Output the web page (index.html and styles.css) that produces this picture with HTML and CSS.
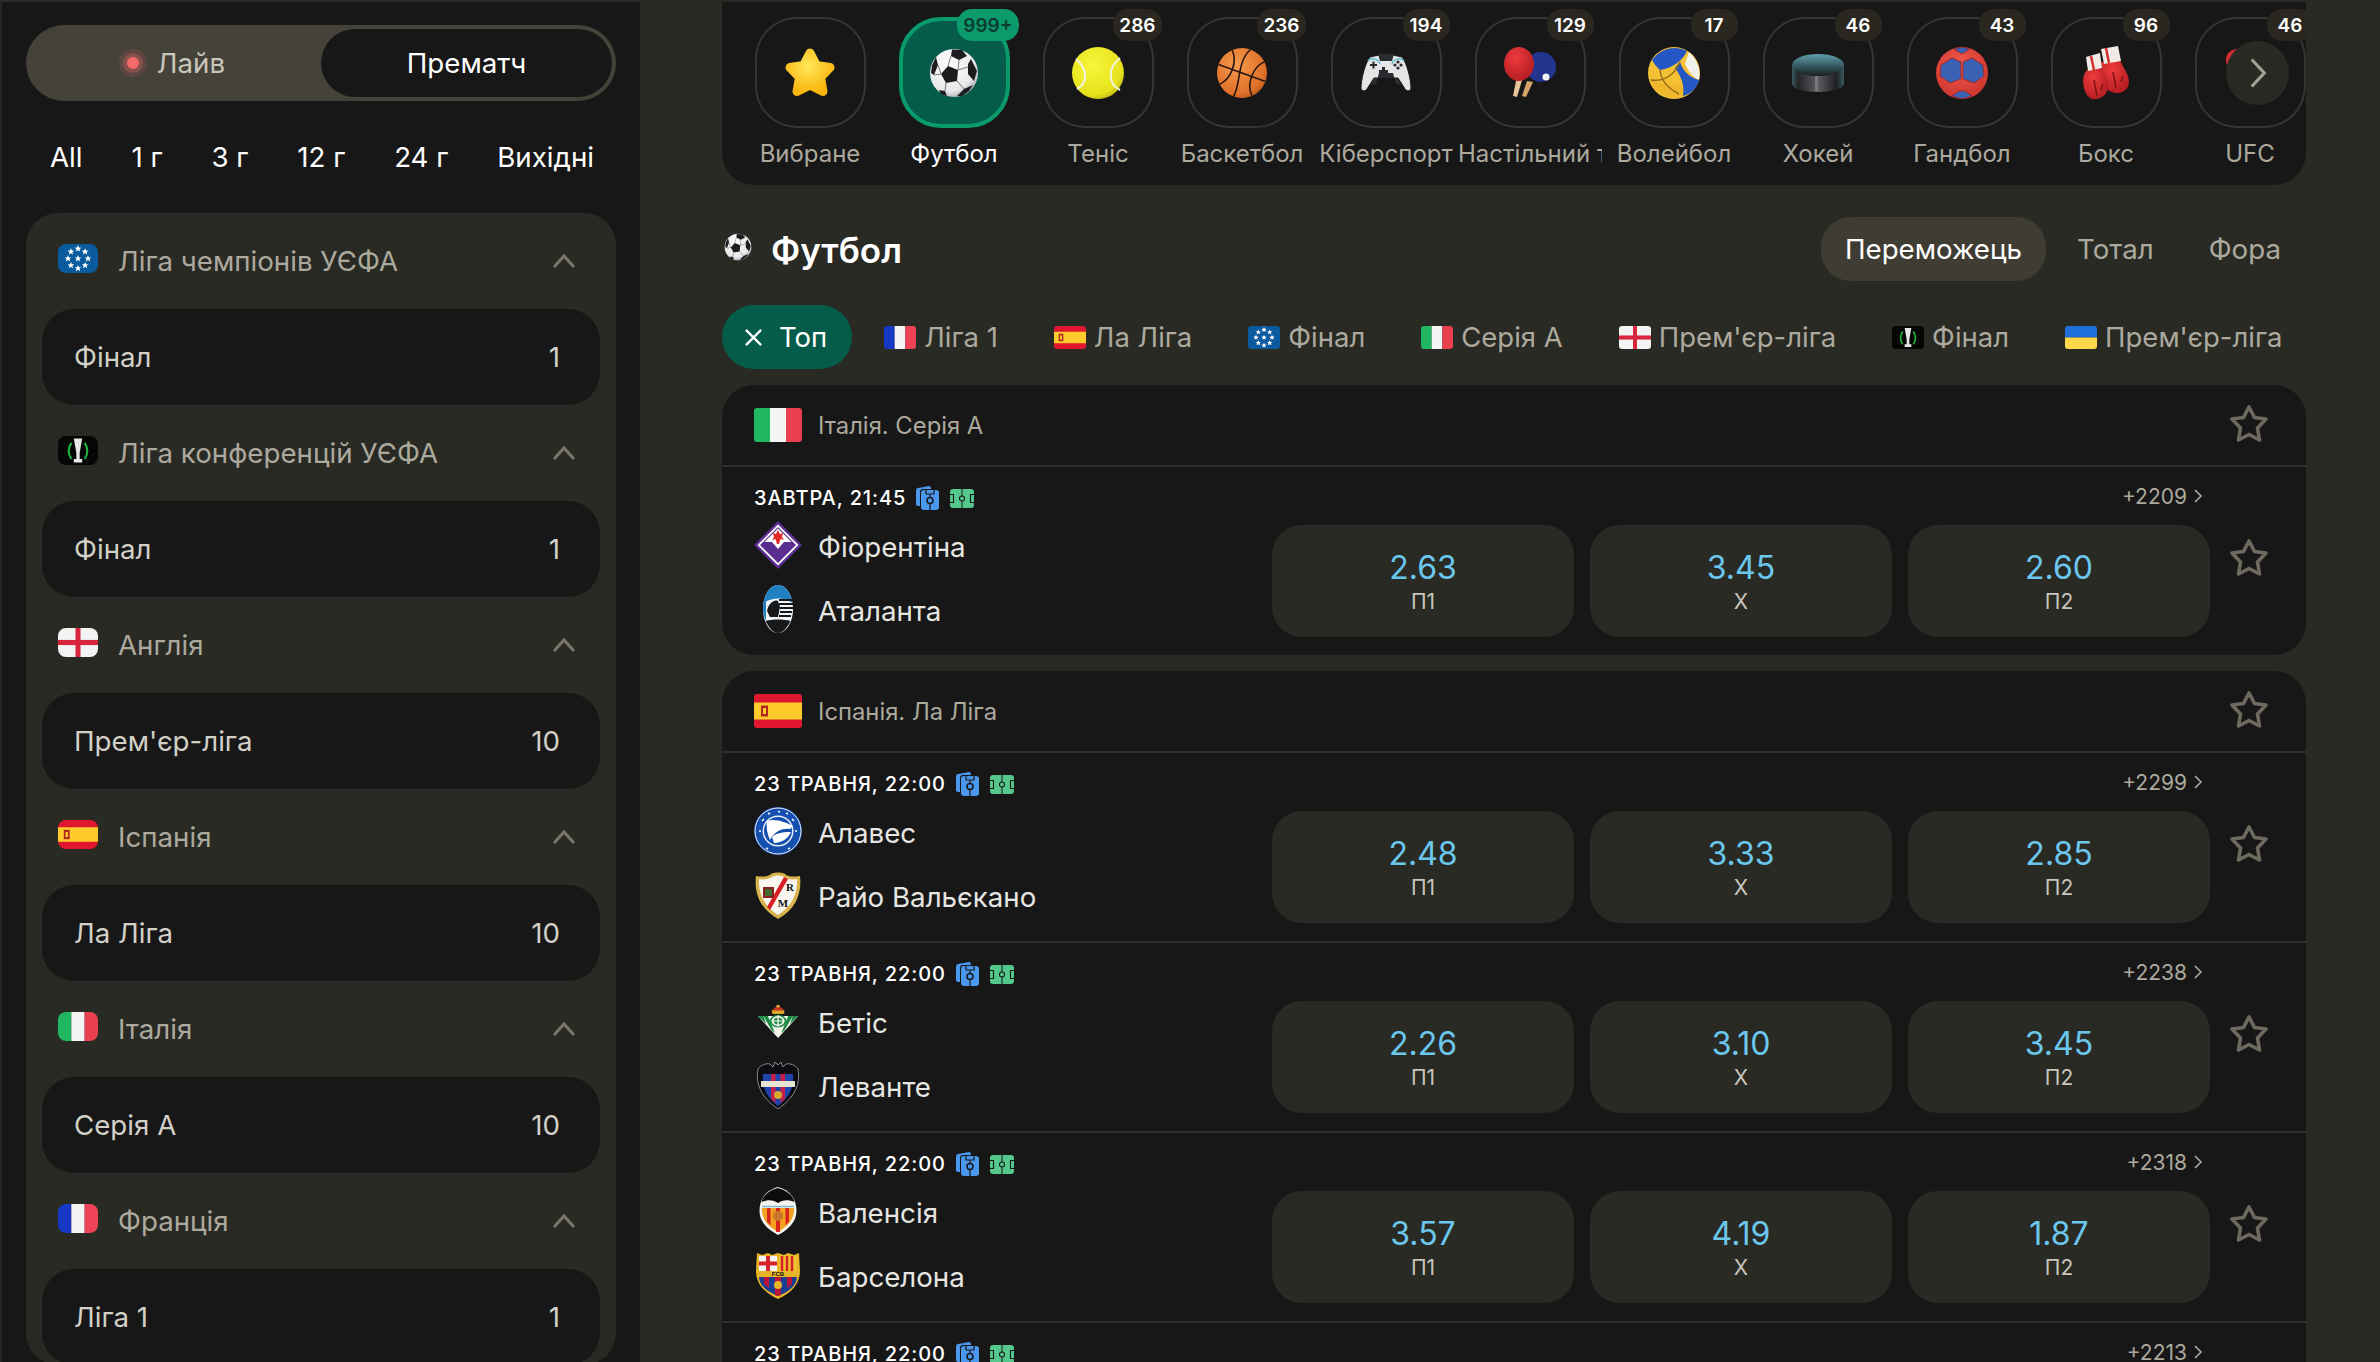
FILE: index.html
```html
<!DOCTYPE html>
<html lang="uk">
<head>
  <meta charset="utf-8">
  <title>Футбол</title>
  <link rel="stylesheet" href="styles.css">
</head>
<body>
  <!-- shared drawings -->
  <svg class="defs" aria-hidden="true">
    <defs>
      <radialGradient id="g-star" cx="45%" cy="35%" r="70%"><stop offset="0" stop-color="#ffe75a"/><stop offset="1" stop-color="#f9b50c"/></radialGradient>
      <radialGradient id="g-white" cx="40%" cy="35%" r="75%"><stop offset="0" stop-color="#fff"/><stop offset=".7" stop-color="#e8e8ea"/><stop offset="1" stop-color="#9a9aa2"/></radialGradient>
      <radialGradient id="g-tennis" cx="40%" cy="35%" r="75%"><stop offset="0" stop-color="#f8f63c"/><stop offset=".75" stop-color="#e6e21c"/><stop offset="1" stop-color="#b5ae12"/></radialGradient>
      <radialGradient id="g-basket" cx="40%" cy="35%" r="75%"><stop offset="0" stop-color="#f59a4c"/><stop offset=".75" stop-color="#e0702a"/><stop offset="1" stop-color="#b04d18"/></radialGradient>
      <radialGradient id="g-hand" cx="45%" cy="35%" r="75%"><stop offset="0" stop-color="#f25a4c"/><stop offset="1" stop-color="#c9302a"/></radialGradient>
      <radialGradient id="g-red" cx="40%" cy="30%" r="80%"><stop offset="0" stop-color="#ee3a3c"/><stop offset="1" stop-color="#ad1a20"/></radialGradient>
      <linearGradient id="g-puck" x1="0" y1="0" x2="1" y2="0"><stop offset="0" stop-color="#3c5a60"/><stop offset=".12" stop-color="#232527"/><stop offset=".5" stop-color="#5c5e62"/><stop offset=".85" stop-color="#1e2022"/><stop offset="1" stop-color="#3c5a60"/></linearGradient>
      <linearGradient id="g-pucktop" x1="0" y1="0" x2="0" y2="1"><stop offset="0" stop-color="#5f9fac"/><stop offset=".6" stop-color="#33525a"/><stop offset="1" stop-color="#1b1e20"/></linearGradient>

      <path id="s" d="M0-4 1.200-1.300 4-1.200 1.800.6 2.600 3.400 0 1.800-2.600 3.400-1.800.6-4-1.200-1.200-1.300Z" fill="#fff"/>

      <g id="f-ucl">
        <rect width="48" height="34" fill="#0a5a9e"/>
        <use href="#s" x="24" y="5.500"/><use href="#s" x="32.500" y="9"/><use href="#s" x="36" y="17"/><use href="#s" x="32.500" y="25"/>
        <use href="#s" x="24" y="28.500"/><use href="#s" x="15.500" y="25"/><use href="#s" x="12" y="17"/><use href="#s" x="15.500" y="9"/><use href="#s" x="24" y="17"/>
      </g>
      <g id="f-uecl">
        <rect width="48" height="34" fill="#050605"/>
        <path d="M16 8C12 14 12 21 16 27M32 8C36 14 36 21 32 27" fill="none" stroke="#20b53c" stroke-width="2.500"/>
        <path d="M19 3H29L26 20V27H29V31H19V27H22V20Z" fill="#e8e8e8"/>
      </g>
      <g id="f-en">
        <rect width="48" height="34" fill="#f3f3f3"/>
        <rect x="21" width="6" height="34" fill="#d8243c"/><rect y="14" width="48" height="6" fill="#d8243c"/>
      </g>
      <g id="f-es">
        <rect width="48" height="34" fill="#e0172e"/><rect y="8.500" width="48" height="17" fill="#ffcb2c"/>
        <rect x="7" y="11.500" width="7" height="11" fill="#b3261e"/><rect x="9" y="14" width="3" height="6" fill="#ffcb2c"/>
      </g>
      <g id="f-it">
        <rect width="16" height="34" fill="#1fb860"/><rect x="16" width="16" height="34" fill="#f5f5f5"/><rect x="32" width="16" height="34" fill="#e8404f"/>
      </g>
      <g id="f-fr">
        <rect width="16" height="34" fill="#1638c4"/><rect x="16" width="16" height="34" fill="#f5f5f5"/><rect x="32" width="16" height="34" fill="#ef4358"/>
      </g>
      <g id="f-ua">
        <rect width="48" height="17" fill="#1e6fd9"/><rect y="17" width="48" height="17" fill="#ffd84a"/>
      </g>

      <g id="i-star"><path d="M27 7 33.500 19.500 47 21.500 37.500 31.500 40 45.500 27 39 14 45.500 16.500 31.500 7 21.500 20.500 19.500Z" fill="url(#g-star)" stroke="url(#g-star)" stroke-width="9" stroke-linejoin="round"/></g>
      <g id="i-ball">
        <circle cx="27" cy="27" r="24" fill="url(#g-white)"/>
        <path d="M21 20 31 24 30 35 19 37 14 28Z" fill="#1d1d20"/>
        <path d="M25 3.500 35 4 40 10 32 14 24 10ZM44 13 50 25 47 35 41 28 41 18ZM30 50 37 43 46 39 42 45 35 50ZM5 19 9 11 11 19 7 29 4 27ZM12 44 18 45 20 50 14 48Z" fill="#1d1d20"/>
        <path d="M24 10 21 20M32 14 31 24M31 24 41 21M30 35 37 43M19 37 18 45M14 28 7 29M14 28 11 19" stroke="#77777d" stroke-width="1" fill="none"/>
      </g>
      <g id="i-tennis">
        <circle cx="27" cy="27" r="26" fill="url(#g-tennis)"/>
        <path d="M5 13C17 23 17 37 6 43M49 12C36 22 37 38 49 44" fill="none" stroke="#f2f2dc" stroke-width="2.200"/>
      </g>
      <g id="i-basket">
        <circle cx="27" cy="27" r="25" fill="url(#g-basket)"/>
        <path d="M2 27H52M27 2C18 18 30 38 27 52M10 9C19 18 19 36 10 45M44 9C35 18 35 36 44 45" fill="none" stroke="#2a1610" stroke-width="1.600" transform="rotate(20 27 27)"/>
      </g>
      <g id="i-pad">
        <path d="M11 11 20 9H34L43 11C48 17 52 34 52 42 52 45 48 46 46 43L39 32H15L8 43C6 46 2 45 2 42 2 34 6 17 11 11Z" fill="#e4e5e7" stroke="#17181a" stroke-width="1"/>
        <path d="M19 8H35L33 15H21Z" fill="#2a2c30"/>
        <path d="M15 32H39L42 39 37 38 34 27H20L17 38 12 39Z" fill="#2a2c30"/>
        <path d="M9 15C12 11 20 13 21 18M45 15C42 11 34 13 33 18" fill="none" stroke="#5fc0d2" stroke-width="1.400"/>
        <path d="M20 24h3v-3h3v3h3v3h-3v3h-3v-3h-3Z" fill="#26282b"/>
        <rect x="11" y="18" width="7" height="2" fill="#26282b"/><rect x="13.500" y="15.500" width="2" height="7" fill="#26282b"/>
        <circle cx="36" cy="19" r="1.600" fill="#26282b"/><circle cx="42" cy="19" r="1.600" fill="#26282b"/><circle cx="39" cy="16" r="1.600" fill="#26282b"/><circle cx="39" cy="22" r="1.600" fill="#26282b"/>
      </g>
      <g id="i-paddles">
        <circle cx="38" cy="21" r="15" fill="#24358f"/>
        <path d="M24 35 19 50 23 51 30 36Z" fill="#d9a46a"/>
        <circle cx="43" cy="31" r="3.500" fill="#f4f4f4"/>
        <path d="M14 30 10 50 14 51 20 31Z" fill="#e8c49a"/>
        <ellipse cx="16" cy="18" rx="15" ry="17" fill="url(#g-red)"/>
      </g>
      <g id="i-volley">
        <circle cx="27" cy="27" r="26" fill="#f4c134"/>
        <path d="M5 14C14 2 28-1 40 5 36 14 26 22 13 24 10 21 7 18 5 14Z" fill="#2457c4"/>
        <path d="M42 6C50 13 54 24 52 34 46 32 42 26 38 18Z" fill="#f1f1ea"/>
        <path d="M3 30C10 38 24 42 38 36L48 41C40 52 22 56 9 44 5 40 3 35 3 30Z" fill="#f0b72c"/>
        <path d="M28 22C34 30 38 40 36 50 44 48 50 42 52 34 44 32 36 26 33 16Z" fill="#2457c4"/>
        <path d="M13 24C14 34 20 42 32 48M33 16C28 28 18 36 4 34" fill="none" stroke="#8f6a18" stroke-width="1.400"/>
      </g>
      <g id="i-puck">
        <path d="M1 18V37C1 43 13 46 27 46S53 43 53 37V18Z" fill="url(#g-puck)"/>
        <ellipse cx="27" cy="19" rx="26" ry="11" fill="url(#g-pucktop)"/>
        <rect x="24" y="30" width="3" height="15" fill="#77797d"/>
      </g>
      <g id="i-hand">
        <circle cx="27" cy="27" r="26" fill="url(#g-hand)"/>
        <path d="M26 16 17 12 6 19 5 30 15 37 26 33ZM28 16 37 12 48 19 49 30 39 37 28 33ZM19 3 27 1 35 3 27 8ZM17 50 24 45H30L37 50 27 53Z" fill="#3a62b4" stroke="#9c2a2a" stroke-width="1"/>
      </g>
      <g id="i-glove">
        <path d="M22 16 41 14C44 22 50 28 50 36 50 43 44 48 36 47 30 46 26 42 26 36 24 30 22 22 22 16Z" fill="url(#g-red)"/>
        <path d="M8 24 22 22C26 28 30 34 29 42 28 50 20 54 13 53 7 51 4 42 4 34 4 30 6 26 8 24Z" fill="url(#g-red)"/>
        <path d="M7 11 21 7 23 22 9 25ZM22 3 39 0 42 15 25 18Z" fill="#f1e9e4"/>
        <path d="M12 10 15 24M27 2 30 17" stroke="#d23030" stroke-width="2.500"/>
        <path d="M34 26 37 42M44 30 42 36M15 34 18 50M24 38 22 44" stroke="#7a1015" stroke-width="1.400" fill="none"/>
      </g>
      <g id="i-ufc">
        <path d="M3 16C2 7 9 2 18 3 28 4 40 10 44 20 48 32 40 46 28 48 16 46 8 34 3 16Z" fill="url(#g-red)"/>
      </g>

      <g id="l-cards">
        <path d="M1 6C1 4 2 3 3 3L14 1C15 1 16 2 16 4H8C6 4 5 5 5 7V21L3 21C2 21 1 20 1 19Z" fill="#4a97ee"/>
        <rect x="6" y="5" width="18" height="20" rx="3" fill="#4a97ee"/>
        <path d="M11 5V9H19V5M15 9V12M15 19V25" fill="none" stroke="#171717" stroke-width="1.200"/>
        <circle cx="15" cy="15.500" r="3" fill="none" stroke="#171717" stroke-width="1.500"/>
      </g>
      <g id="l-field">
        <rect width="24" height="19" rx="3" fill="#54c88a"/>
        <path d="M12 0V7M12 12V19" stroke="#171717" stroke-width="1"/>
        <circle cx="12" cy="9.500" r="2.500" fill="none" stroke="#171717" stroke-width="1.100"/>
        <path d="M0 5.500H3.500V13.500H0M24 5.500H20.500V13.500H24" fill="none" stroke="#171717" stroke-width="1.100"/>
      </g>
      <path id="i-fav" d="M19 3 24.500 13.500 36 15 27.500 24 29.500 36 19 30.500 8.500 36 10.500 24 2 15 13.500 13.500Z" fill="none" stroke="#6f6a5f" stroke-width="3.600" stroke-linejoin="round"/>

      <g id="t-fio">
        <path d="M24 0 48 24 24 48 0 24Z" fill="#5b2d91"/>
        <path d="M24 3.500 44.500 24 24 44.500 3.500 24Z" fill="#fff"/>
        <path d="M24 6 42 24 24 42 6 24Z" fill="#5b2d91"/>
        <path d="M24 7.500 37.500 21 30 21 24 28 18 21 10.500 21Z" fill="#fff"/>
        <path d="M24 9 26 13 29 12 28 16 30 19 26.500 18 25 23H23L21.500 18 18 19 20 16 19 12 22 13Z" fill="#e12a2a"/>
      </g>
      <g id="t-ata">
        <ellipse cx="24" cy="24" rx="15" ry="24" fill="#f2f5f7"/>
        <path d="M9.500 18C11 8 17 0 24 0S37 8 38.500 18C30 12 18 12 9.500 18Z" fill="#1f7fc0"/>
        <path d="M11.500 36C18 34 30 34 36.500 36 33 43 29 48 24 48S15 43 11.500 36Z" fill="#17181a"/>
        <path d="M9 24C9 18 10 14 12 12V36C10 32 9 28 9 24Z" fill="#1f7fc0"/>
        <path d="M25 15H38M25 19H39M26 23H39M26 27H38M25 31H37" stroke="#17181a" stroke-width="2"/>
        <path d="M13 26C14 20 19 14 24 16L26 22 24 32H16Z" fill="#17181a"/>
      </g>
      <g id="t-ala">
        <circle cx="24" cy="24" r="24" fill="#1550b0"/>
        <circle cx="24" cy="24" r="23" fill="none" stroke="#e8eef8" stroke-width="1"/>
        <circle cx="24" cy="24" r="15.500" fill="#e8eef8"/>
        <circle cx="24" cy="24" r="14" fill="#1550b0"/>
        <path d="M13 14C21 11 31 15 39 19L36 22C30 21 21 23 16 33 13 27 12 20 13 14Z" fill="#fff"/>
        <path d="M18 30C24 25 31 25 37 25 34 32 27 36 20 36Z" fill="#fff"/>
        <path d="M24 4.500 26 5M14 7 16 6M32 6 34 7M38 12 40 14M8 14 10 12M5 24H7M41 24H43M12 41 14 42M34 42 36 41" stroke="#fff" stroke-width="1.600"/>
      </g>
      <g id="t-ray">
        <path d="M2 5C8 6 14 6 17 3 20 1 28 1 31 3 34 6 40 6 46 5 48 22 42 38 24 48 6 38 0 22 2 5Z" fill="#d8b24a"/>
        <path d="M5 8C10 9 15 8 18 6 21 4 27 4 30 6 33 8 38 9 43 8 44 22 38 35 24 44 10 35 4 22 5 8Z" fill="#f8f6ee"/>
        <path d="M30 6 34 8 16 39 13 36Z" fill="#d81f26"/>
        <rect x="9" y="16" width="11" height="11" fill="#8a1f1f"/><rect x="11" y="18" width="7" height="7" fill="#3f6b2f"/>
        <text class="crest-letter" x="36" y="20">R</text><text class="crest-letter" x="29" y="36">M</text>
      </g>
      <g id="t-bet" transform="translate(2 7) scale(.92 .71)">
        <path d="M17 13C17 7 20 5 24 3 28 5 31 7 31 13Z" fill="#c8321e"/>
        <path d="M17 9H31L30 14H18Z" fill="#d9a92e"/>
        <circle cx="24" cy="3" r="2" fill="#d9a92e"/>
        <path d="M2 17H46L24 48Z" fill="#f4f6ee"/>
        <path d="M8 17H13L20.500 41 17 37ZM35 17H40L31 37 27.500 41ZM2 17H8L11 28 6 22ZM40 17H46L42 22 37 28Z" fill="#1c8a45"/>
        <circle cx="24" cy="24" r="9" fill="#1c8a45"/><circle cx="24" cy="24" r="6" fill="none" stroke="#f4f6ee" stroke-width="2"/>
        <path d="M24 16V32M17 24H31" stroke="#f4f6ee" stroke-width="1.500"/>
      </g>
      <g id="t-lev">
        <path d="M4 8C7 4 12 2 16 3L19 6 21 1 24 4 27 1 29 6 32 3C36 2 41 4 44 8 46 20 44 34 24 48 4 34 2 20 4 8Z" fill="#0c0c10" stroke="#8a8a90" stroke-width="1"/>
        <path d="M9 13H39C40 26 36 36 24 45 12 36 8 26 9 13Z" fill="#1f45ac"/>
        <path d="M17 13H21.500V42L17 38ZM26.500 13H31V38L26.500 42Z" fill="#c4204a"/>
        <rect x="7" y="20" width="34" height="6" fill="#e8e4d4"/>
        <circle cx="24" cy="34" r="4" fill="#d9a92e"/>
      </g>
      <g id="t-val">
        <path d="M24 0C36 3 42.500 12 42.500 24 42.500 35 34 43 24 48 14 43 5.500 35 5.500 24 5.500 12 12 3 24 0Z" fill="#f4f4ee"/>
        <path d="M7.500 15C9 8 16 3 24 1 32 3 39 8 40.500 15 34 12 28 13 24 16 20 13 14 12 7.500 15Z" fill="#0c0c0e"/>
        <path d="M8 21H40C41 32 33 40 24 45 15 40 7 32 8 21Z" fill="#f4a020"/>
        <path d="M13 21H16.500V38L13 35ZM22 21H26V45H22ZM31.500 21H35V35L31.500 38Z" fill="#d8261e"/>
        <circle cx="24" cy="29" r="5" fill="#c7762c"/>
        <path d="M8 19.500H40" stroke="#7cb8d8" stroke-width="1.500"/>
      </g>
      <g id="t-bar">
        <path d="M3 2 8 4 14 2 18 4 24 2 30 4 34 2 40 4 45 2 46 20C46 32 38 42 24 48 10 42 2 32 2 20Z" fill="#e8b526"/>
        <rect x="5" y="5" width="18" height="15" fill="#f4f4f4"/>
        <rect x="12" y="5" width="4" height="15" fill="#d8232a"/><rect x="5" y="10.500" width="18" height="4" fill="#d8232a"/>
        <rect x="25" y="5" width="18" height="15" fill="#edc22c"/>
        <path d="M28 5V20M33 5V20M38 5V20" stroke="#d8232a" stroke-width="2.500"/>
        <path d="M5 26H43C43 34 35 41 24 45 13 41 5 34 5 26Z" fill="#1b3e94"/>
        <path d="M10 26H15V37L10 33ZM21 26H27V44L24 45 21 44ZM33 26H38V33L33 37Z" fill="#b8143c"/>
        <circle cx="24" cy="34" r="4" fill="#e8b526"/>
        <text class="crest-bar" x="24" y="25">FCB</text>
      </g>
    </defs>
  </svg>

  <div class="app">
    <aside class="side">
      <div class="mode">
        <div class="mode-live"><span class="live-dot"></span>Лайв</div>
        <div class="mode-pre">Прематч</div>
      </div>
      <div class="periods">
        <span>All</span><span>1 г</span><span>3 г</span><span>12 г</span><span>24 г</span><span>Вихідні</span>
      </div>
      <div class="tree">
        <div class="tree-head">
          <svg class="flag flag-side" viewBox="0 0 48 34" preserveAspectRatio="none"><use href="#f-ucl"/></svg>
          <span class="tree-name">Ліга чемпіонів УЄФА</span>
          <svg class="caret" viewBox="0 0 24 16"><path d="M2 14 12 3 22 14"/></svg>
        </div>
        <div class="tree-item"><span>Фінал</span><span>1</span></div>
        <div class="tree-head">
          <svg class="flag flag-side" viewBox="0 0 48 34" preserveAspectRatio="none"><use href="#f-uecl"/></svg>
          <span class="tree-name">Ліга конференцій УЄФА</span>
          <svg class="caret" viewBox="0 0 24 16"><path d="M2 14 12 3 22 14"/></svg>
        </div>
        <div class="tree-item"><span>Фінал</span><span>1</span></div>
        <div class="tree-head">
          <svg class="flag flag-side" viewBox="0 0 48 34" preserveAspectRatio="none"><use href="#f-en"/></svg>
          <span class="tree-name">Англія</span>
          <svg class="caret" viewBox="0 0 24 16"><path d="M2 14 12 3 22 14"/></svg>
        </div>
        <div class="tree-item"><span>Прем'єр-ліга</span><span>10</span></div>
        <div class="tree-head">
          <svg class="flag flag-side" viewBox="0 0 48 34" preserveAspectRatio="none"><use href="#f-es"/></svg>
          <span class="tree-name">Іспанія</span>
          <svg class="caret" viewBox="0 0 24 16"><path d="M2 14 12 3 22 14"/></svg>
        </div>
        <div class="tree-item"><span>Ла Ліга</span><span>10</span></div>
        <div class="tree-head">
          <svg class="flag flag-side" viewBox="0 0 48 34" preserveAspectRatio="none"><use href="#f-it"/></svg>
          <span class="tree-name">Італія</span>
          <svg class="caret" viewBox="0 0 24 16"><path d="M2 14 12 3 22 14"/></svg>
        </div>
        <div class="tree-item"><span>Серія А</span><span>10</span></div>
        <div class="tree-head">
          <svg class="flag flag-side" viewBox="0 0 48 34" preserveAspectRatio="none"><use href="#f-fr"/></svg>
          <span class="tree-name">Франція</span>
          <svg class="caret" viewBox="0 0 24 16"><path d="M2 14 12 3 22 14"/></svg>
        </div>
        <div class="tree-item"><span>Ліга 1</span><span>1</span></div>
      </div>
    </aside>

    <main class="main">
      <nav class="sports">
        <div class="sport">
          <div class="sport-card"><svg class="sport-icon" viewBox="0 0 54 54"><use href="#i-star"/></svg></div>
          <div class="sport-name">Вибране</div>
        </div>
        <div class="sport sport-active">
          <div class="sport-card"><svg class="sport-icon" viewBox="0 0 54 54"><use href="#i-ball"/></svg><span class="badge">999+</span></div>
          <div class="sport-name">Футбол</div>
        </div>
        <div class="sport">
          <div class="sport-card"><svg class="sport-icon" viewBox="0 0 54 54"><use href="#i-tennis"/></svg><span class="badge">286</span></div>
          <div class="sport-name">Теніс</div>
        </div>
        <div class="sport">
          <div class="sport-card"><svg class="sport-icon" viewBox="0 0 54 54"><use href="#i-basket"/></svg><span class="badge">236</span></div>
          <div class="sport-name">Баскетбол</div>
        </div>
        <div class="sport">
          <div class="sport-card"><svg class="sport-icon" viewBox="0 0 54 54"><use href="#i-pad"/></svg><span class="badge">194</span></div>
          <div class="sport-name">Кіберспорт</div>
        </div>
        <div class="sport">
          <div class="sport-card"><svg class="sport-icon" viewBox="0 0 54 54"><use href="#i-paddles"/></svg><span class="badge">129</span></div>
          <div class="sport-name">Настільний теніс</div>
        </div>
        <div class="sport">
          <div class="sport-card"><svg class="sport-icon" viewBox="0 0 54 54"><use href="#i-volley"/></svg><span class="badge">17</span></div>
          <div class="sport-name">Волейбол</div>
        </div>
        <div class="sport">
          <div class="sport-card"><svg class="sport-icon" viewBox="0 0 54 54"><use href="#i-puck"/></svg><span class="badge">46</span></div>
          <div class="sport-name">Хокей</div>
        </div>
        <div class="sport">
          <div class="sport-card"><svg class="sport-icon" viewBox="0 0 54 54"><use href="#i-hand"/></svg><span class="badge">43</span></div>
          <div class="sport-name">Гандбол</div>
        </div>
        <div class="sport">
          <div class="sport-card"><svg class="sport-icon" viewBox="0 0 54 54"><use href="#i-glove"/></svg><span class="badge">96</span></div>
          <div class="sport-name">Бокс</div>
        </div>
        <div class="sport">
          <div class="sport-card"><svg class="sport-icon" viewBox="0 0 54 54"><use href="#i-ufc"/></svg><span class="badge">46</span></div>
          <div class="sport-name">UFC</div>
        </div>
        <div class="sports-next"><svg viewBox="0 0 20 34"><path d="M3 2 17 17 3 32"/></svg></div>
      </nav>

      <div class="title-row">
        <svg class="title-icon" viewBox="0 0 54 54"><use href="#i-ball"/></svg>
        <h1>Футбол</h1>
        <div class="tabs">
          <span class="tab tab-active">Переможець</span>
          <span class="tab">Тотал</span>
          <span class="tab">Фора</span>
        </div>
      </div>

      <div class="chips">
        <span class="chip chip-top"><svg class="chip-x" viewBox="0 0 20 20"><path d="M2 2 18 18M18 2 2 18"/></svg>Топ</span>
        <span class="chip"><svg class="flag flag-chip" viewBox="0 0 48 34" preserveAspectRatio="none"><use href="#f-fr"/></svg>Ліга 1</span>
        <span class="chip"><svg class="flag flag-chip" viewBox="0 0 48 34" preserveAspectRatio="none"><use href="#f-es"/></svg>Ла Ліга</span>
        <span class="chip"><svg class="flag flag-chip" viewBox="0 0 48 34" preserveAspectRatio="none"><use href="#f-ucl"/></svg>Фінал</span>
        <span class="chip"><svg class="flag flag-chip" viewBox="0 0 48 34" preserveAspectRatio="none"><use href="#f-it"/></svg>Серія А</span>
        <span class="chip"><svg class="flag flag-chip" viewBox="0 0 48 34" preserveAspectRatio="none"><use href="#f-en"/></svg>Прем'єр-ліга</span>
        <span class="chip"><svg class="flag flag-chip" viewBox="0 0 48 34" preserveAspectRatio="none"><use href="#f-uecl"/></svg>Фінал</span>
        <span class="chip"><svg class="flag flag-chip" viewBox="0 0 48 34" preserveAspectRatio="none"><use href="#f-ua"/></svg>Прем'єр-ліга</span>
      </div>

      <section class="league">
        <div class="league-head">
          <svg class="flag flag-card" viewBox="0 0 48 34" preserveAspectRatio="none"><use href="#f-it"/></svg>
          <span class="league-name">Італія. Серія А</span>
          <svg class="fav" viewBox="0 0 38 38"><use href="#i-fav"/></svg>
        </div>
        <div class="match">
          <div class="match-info">
            <div class="match-date">ЗАВТРА, 21:45
              <svg class="mark-cards" viewBox="0 0 25 26"><use href="#l-cards"/></svg>
              <svg class="mark-field" viewBox="0 0 24 19"><use href="#l-field"/></svg>
            </div>
            <div class="team"><svg class="crest" viewBox="0 0 48 48"><use href="#t-fio"/></svg>Фіорентіна</div>
            <div class="team"><svg class="crest" viewBox="0 0 48 48"><use href="#t-ata"/></svg>Аталанта</div>
          </div>
          <div class="match-bets">
            <div class="more">+2209<svg viewBox="0 0 10 16"><path d="M2 2 8 8 2 14"/></svg></div>
            <div class="odds">
              <div class="odd"><b>2.63</b><span>П1</span></div>
              <div class="odd"><b>3.45</b><span>Х</span></div>
              <div class="odd"><b>2.60</b><span>П2</span></div>
            </div>
          </div>
          <svg class="fav fav-match" viewBox="0 0 38 38"><use href="#i-fav"/></svg>
        </div>
      </section>

      <section class="league">
        <div class="league-head">
          <svg class="flag flag-card" viewBox="0 0 48 34" preserveAspectRatio="none"><use href="#f-es"/></svg>
          <span class="league-name">Іспанія. Ла Ліга</span>
          <svg class="fav" viewBox="0 0 38 38"><use href="#i-fav"/></svg>
        </div>
        <div class="match">
          <div class="match-info">
            <div class="match-date">23 ТРАВНЯ, 22:00
              <svg class="mark-cards" viewBox="0 0 25 26"><use href="#l-cards"/></svg>
              <svg class="mark-field" viewBox="0 0 24 19"><use href="#l-field"/></svg>
            </div>
            <div class="team"><svg class="crest" viewBox="0 0 48 48"><use href="#t-ala"/></svg>Алавес</div>
            <div class="team"><svg class="crest" viewBox="0 0 48 48"><use href="#t-ray"/></svg>Райо Вальєкано</div>
          </div>
          <div class="match-bets">
            <div class="more">+2299<svg viewBox="0 0 10 16"><path d="M2 2 8 8 2 14"/></svg></div>
            <div class="odds">
              <div class="odd"><b>2.48</b><span>П1</span></div>
              <div class="odd"><b>3.33</b><span>Х</span></div>
              <div class="odd"><b>2.85</b><span>П2</span></div>
            </div>
          </div>
          <svg class="fav fav-match" viewBox="0 0 38 38"><use href="#i-fav"/></svg>
        </div>
        <div class="match">
          <div class="match-info">
            <div class="match-date">23 ТРАВНЯ, 22:00
              <svg class="mark-cards" viewBox="0 0 25 26"><use href="#l-cards"/></svg>
              <svg class="mark-field" viewBox="0 0 24 19"><use href="#l-field"/></svg>
            </div>
            <div class="team"><svg class="crest" viewBox="0 0 48 48"><use href="#t-bet"/></svg>Бетіс</div>
            <div class="team"><svg class="crest" viewBox="0 0 48 48"><use href="#t-lev"/></svg>Леванте</div>
          </div>
          <div class="match-bets">
            <div class="more">+2238<svg viewBox="0 0 10 16"><path d="M2 2 8 8 2 14"/></svg></div>
            <div class="odds">
              <div class="odd"><b>2.26</b><span>П1</span></div>
              <div class="odd"><b>3.10</b><span>Х</span></div>
              <div class="odd"><b>3.45</b><span>П2</span></div>
            </div>
          </div>
          <svg class="fav fav-match" viewBox="0 0 38 38"><use href="#i-fav"/></svg>
        </div>
        <div class="match">
          <div class="match-info">
            <div class="match-date">23 ТРАВНЯ, 22:00
              <svg class="mark-cards" viewBox="0 0 25 26"><use href="#l-cards"/></svg>
              <svg class="mark-field" viewBox="0 0 24 19"><use href="#l-field"/></svg>
            </div>
            <div class="team"><svg class="crest" viewBox="0 0 48 48"><use href="#t-val"/></svg>Валенсія</div>
            <div class="team"><svg class="crest" viewBox="0 0 48 48"><use href="#t-bar"/></svg>Барселона</div>
          </div>
          <div class="match-bets">
            <div class="more">+2318<svg viewBox="0 0 10 16"><path d="M2 2 8 8 2 14"/></svg></div>
            <div class="odds">
              <div class="odd"><b>3.57</b><span>П1</span></div>
              <div class="odd"><b>4.19</b><span>Х</span></div>
              <div class="odd"><b>1.87</b><span>П2</span></div>
            </div>
          </div>
          <svg class="fav fav-match" viewBox="0 0 38 38"><use href="#i-fav"/></svg>
        </div>
        <div class="match">
          <div class="match-info">
            <div class="match-date">23 ТРАВНЯ, 22:00
              <svg class="mark-cards" viewBox="0 0 25 26"><use href="#l-cards"/></svg>
              <svg class="mark-field" viewBox="0 0 24 19"><use href="#l-field"/></svg>
            </div>
          </div>
          <div class="match-bets">
            <div class="more">+2213<svg viewBox="0 0 10 16"><path d="M2 2 8 8 2 14"/></svg></div>
          </div>
        </div>
      </section>
    </main>
  </div>
</body>
</html>
```

FILE: styles.css
```css
html, body {
  margin: 0;
  height: 100%;
  overflow: hidden;
}

body {
  background: #2a2a24;
  color: #fff;
  font-family: Inter, "Noto Sans", sans-serif;
}

.defs {
  position: absolute;
  width: 0;
  height: 0;
}

.app {
  display: flex;
  height: 1362px;
  overflow: hidden;
}

/* left column */
.side {
  flex: none;
  width: 640px;
  box-sizing: border-box;
  padding: 23px 24px 0 24px;
  border-top: 2px solid #2b2b29;
  border-left: 2px solid #262626;
  background: #171717;
}

.mode {
  display: flex;
  height: 76px;
  border-radius: 38px;
  background: #45423a;
}

.mode-live {
  width: 295px;
  box-sizing: border-box;
  padding-left: 5px;
  display: flex;
  align-items: center;
  justify-content: center;
  gap: 18px;
  font-size: 27.700px;
  color: #c9c6bc;
}

.live-dot {
  width: 12px;
  height: 12px;
  border-radius: 50%;
  background: #f26a6a;
  box-shadow: 0 0 0 4px rgba(242, 106, 106, .3), 0 0 0 8px rgba(242, 106, 106, .14);
}

.mode-pre {
  width: 291px;
  margin: 4px 0;
  display: flex;
  align-items: center;
  justify-content: center;
  border-radius: 34px;
  background: #171717;
  font-size: 27.700px;
}

.periods {
  height: 112px;
  padding: 0 22px 0 24px;
  display: flex;
  align-items: center;
  justify-content: space-between;
  font-size: 27.700px;
}

.tree {
  padding: 0 16px;
  border-radius: 32px;
  background: #2a2a24;
}

.tree-head {
  height: 96px;
  padding: 0 24px 0 16px;
  display: flex;
  align-items: center;
  font-size: 27.700px;
  color: #aca99e;
}

.tree-name {
  flex: 1;
  margin-left: 20px;
}

.caret {
  width: 24px;
  height: 16px;
  fill: none;
  stroke: #7a7568;
  stroke-width: 3;
}

.tree-item {
  height: 96px;
  padding: 0 40px 0 32px;
  display: flex;
  align-items: center;
  justify-content: space-between;
  border-radius: 32px;
  background: #171717;
  font-size: 27.700px;
  color: #d2d0c7;
}

.flag {
  flex: none;
}

.flag-side {
  width: 40px;
  height: 29px;
  margin-top: -6px;
  border-radius: 8px;
}

.flag-chip {
  width: 32px;
  height: 23px;
  border-radius: 3px;
}

.flag-card {
  width: 48px;
  height: 34px;
  border-radius: 3px;
}

/* right column */
.main {
  flex: none;
  width: 1584px;
  margin-left: 82px;
}

.sports {
  position: relative;
  height: 183px;
  margin-top: 2px;
  padding: 0 0 0 16px;
  display: flex;
  overflow: hidden;
  border-radius: 0 0 32px 32px;
  background: #171717;
}

.sport {
  flex: none;
  width: 144px;
}

.sport-card {
  position: relative;
  width: 111px;
  height: 111px;
  box-sizing: border-box;
  margin: 15px auto 0;
  display: flex;
  align-items: center;
  justify-content: center;
  border: 2px solid #35352f;
  border-radius: 42px;
}

.sport-icon {
  width: 54px;
  height: 54px;
}

.badge {
  position: absolute;
  top: -10px;
  right: -10px;
  min-width: 47px;
  height: 32px;
  box-sizing: border-box;
  padding: 0 6px;
  display: flex;
  align-items: center;
  justify-content: center;
  border-radius: 15px;
  background: #2a2720;
  font-size: 19px;
  font-weight: 600;
}

.sport-name {
  margin-top: 11px;
  white-space: nowrap;
  overflow: hidden;
  text-align: center;
  font-size: 24px;
  line-height: 30px;
  color: #aca99e;
}

.sport-active .sport-card {
  border: 4px solid #0a9a6c;
  background: #065c4a;
}

.sport-active .badge {
  top: -12px;
  right: -13px;
  min-width: 60px;
  background: #0a9a6c;
  color: #0c3d30;
}

.sport-active .sport-name {
  color: #fff;
}

.sports-next {
  position: absolute;
  top: 39px;
  right: 17px;
  width: 63px;
  height: 64px;
  display: flex;
  align-items: center;
  justify-content: center;
  border-radius: 50%;
  background: #2a2a24;
}

.sports-next svg {
  width: 18px;
  height: 32px;
  fill: none;
  stroke: #a3a094;
  stroke-width: 3.500;
}

.title-row {
  height: 64px;
  margin-top: 32px;
  display: flex;
  align-items: center;
}

.title-icon {
  width: 30px;
  height: 30px;
  margin: -4px 18px 0 1px;
}

h1 {
  flex: 1;
  margin: 2px 0 0;
  font-size: 35px;
  font-weight: 600;
}

.tabs {
  display: flex;
  gap: 7px;
  margin-right: 1px;
}

.tab {
  height: 64px;
  padding: 0 24px;
  display: flex;
  align-items: center;
  border-radius: 30px;
  font-size: 27.700px;
  color: #aca99e;
}

.tab-active {
  background: #3f3c34;
  color: #fff;
}

.chips {
  margin-top: 24px;
  display: flex;
  gap: 8px;
}

.chip {
  flex: none;
  height: 64px;
  padding: 0 24px;
  display: flex;
  align-items: center;
  gap: 8px;
  white-space: nowrap;
  font-size: 27.500px;
  color: #aca99e;
}

.chip-top {
  padding: 0 25px 0 22px;
  gap: 16px;
  border-radius: 32px;
  background: #065c4a;
  color: #fff;
}

.chip-x {
  width: 19px;
  height: 19px;
  fill: none;
  stroke: #fff;
  stroke-width: 2.400;
}

.league {
  margin-top: 16px;
  border-radius: 32px;
  background: #171717;
  overflow: hidden;
}

.league-head {
  height: 80px;
  padding: 0 38px 0 32px;
  display: flex;
  align-items: center;
}

.league-head .fav {
  margin-top: -4px;
}

.league-name {
  flex: 1;
  margin-left: 16px;
  font-size: 23.800px;
  color: #aca99e;
}

.fav {
  flex: none;
  width: 38px;
  height: 38px;
}

.match {
  height: 188px;
  padding: 0 0 0 32px;
  display: flex;
  border-top: 2px solid #2e2e2b;
}

.match-info {
  flex: none;
  width: 518px;
  padding-top: 19px;
}

.match-date {
  height: 24px;
  display: flex;
  align-items: center;
  font-size: 20px;
  font-weight: 500;
  letter-spacing: .9px;
  line-height: 24px;
}

.mark-cards {
  width: 25px;
  height: 26px;
  margin-left: 9px;
}

.mark-field {
  width: 24px;
  height: 19px;
  margin-left: 10px;
}

.team {
  height: 64px;
  display: flex;
  align-items: center;
  gap: 16px;
  font-size: 27.700px;
  color: #e6e6e2;
}

.match-date + .team {
  margin-top: 5px;
}

.crest {
  flex: none;
  width: 48px;
  height: 48px;
  margin-top: -4px;
}

.crest-letter {
  font: 700 11px "Liberation Serif", serif;
  fill: #111;
  text-anchor: middle;
}

.crest-bar {
  font: 700 6px "Liberation Sans", sans-serif;
  fill: #111;
  text-anchor: middle;
}

.match-bets {
  flex: none;
  width: 938px;
}

.more {
  height: 58px;
  padding-right: 7px;
  display: flex;
  align-items: center;
  justify-content: flex-end;
  gap: 6px;
  font-size: 21px;
  color: #aca99e;
}

.more svg {
  width: 10px;
  height: 16px;
  fill: none;
  stroke: #aca99e;
  stroke-width: 1.600;
}

.odds {
  display: flex;
  gap: 16px;
}

.odd {
  flex: 1;
  height: 112px;
  padding-top: 23px;
  box-sizing: border-box;
  display: flex;
  flex-direction: column;
  align-items: center;
  border-radius: 30px;
  background: #2a2a24;
}

.odd b {
  font-size: 32px;
  line-height: 40px;
  font-weight: 400;
  color: #6cc7ee;
}

.odd span {
  margin-top: 1px;
  font-size: 21px;
  line-height: 26px;
  color: #c8c6bd;
}

.fav-match {
  margin: 71px 0 0 20px;
}
```
